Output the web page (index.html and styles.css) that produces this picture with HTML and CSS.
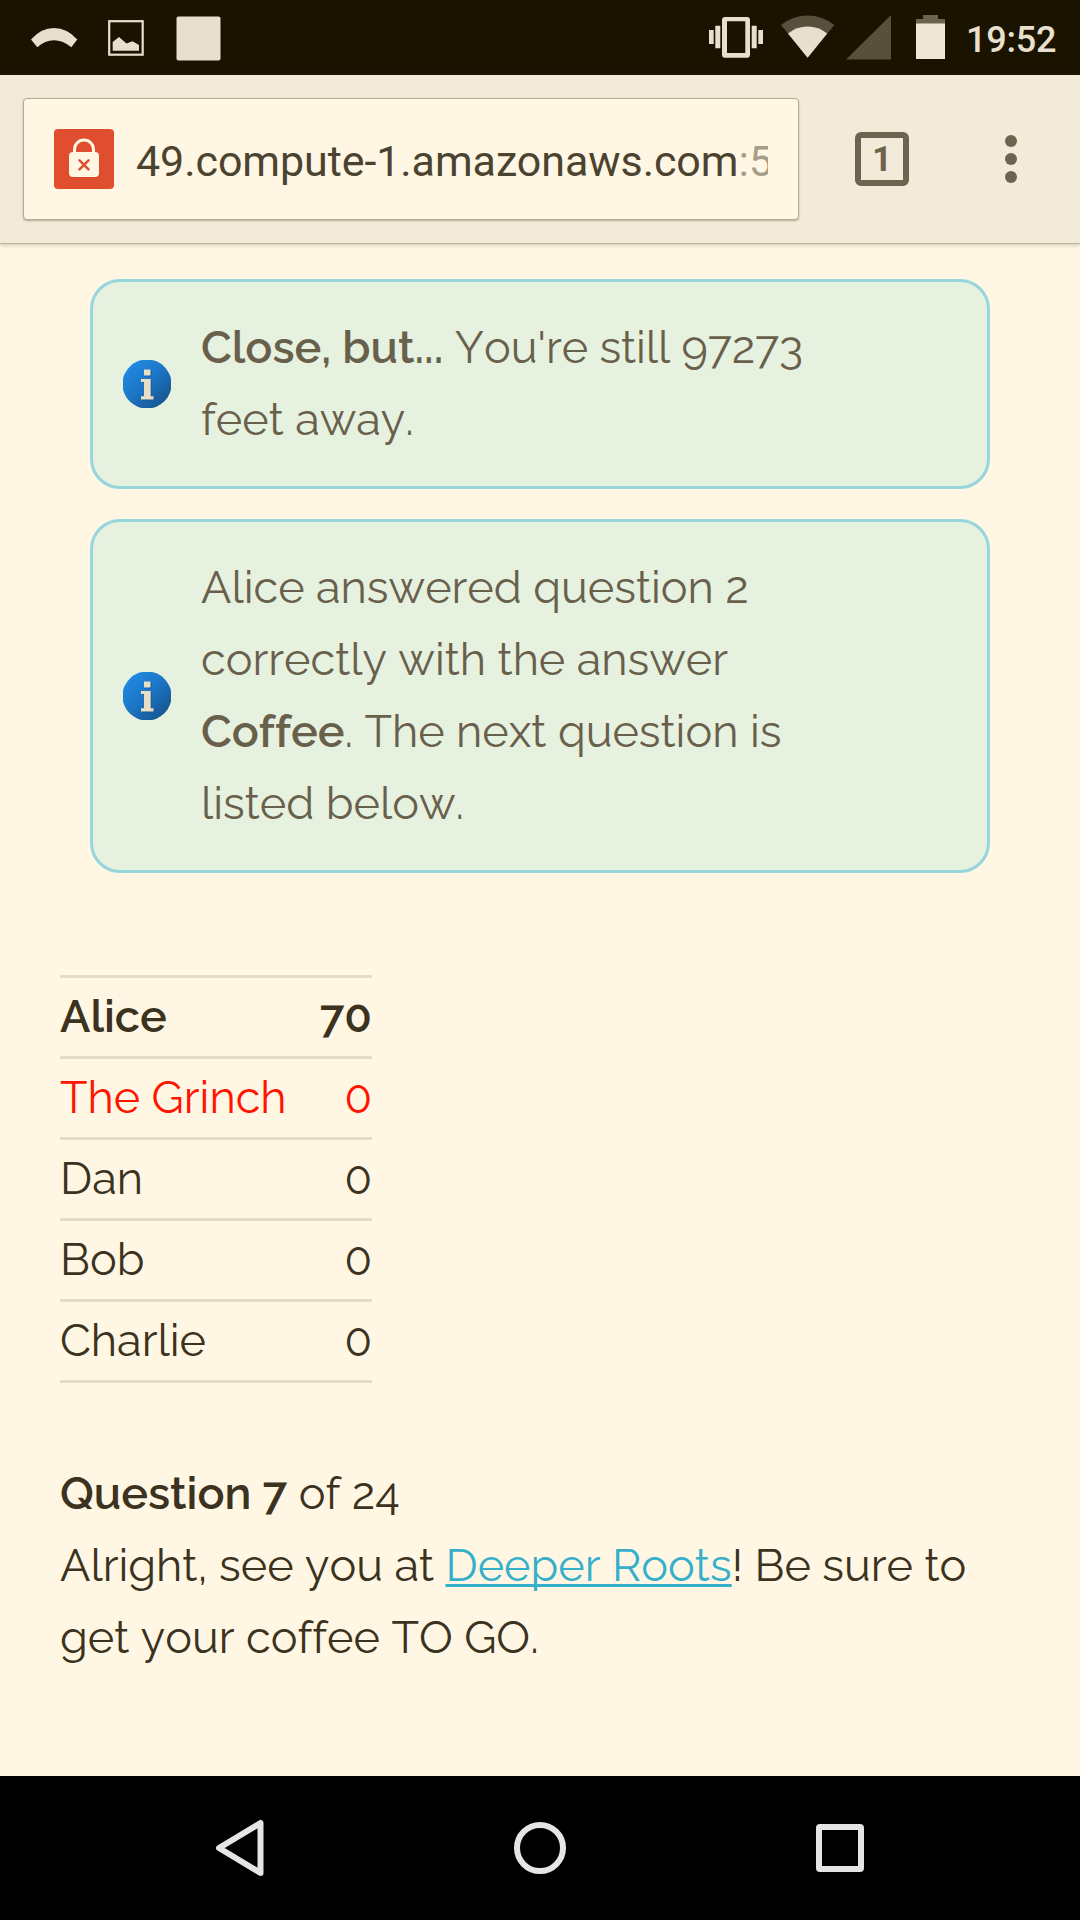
FILE: index.html
```
<!DOCTYPE html>
<html lang="en">
<head>
<meta charset="utf-8">
<title>Scavenger hunt</title>
<link rel="stylesheet" href="styles.css">
</head>
<body>
<svg class="defs" aria-hidden="true">
  <defs>
    <linearGradient id="info-blue" x1="0.15" y1="0.1" x2="0.85" y2="0.9">
      <stop offset="0" stop-color="#1f8ae2"/>
      <stop offset="0.5" stop-color="#1c74c4"/>
      <stop offset="1" stop-color="#17558f"/>
    </linearGradient>
    <symbol id="info" viewBox="0 0 48 48">
      <circle cx="24" cy="24" r="24.500" fill="url(#info-blue)"/>
      <path transform="translate(1 1)" fill="#124f87" opacity=".6" d="M21 9.500h6.500v6H21zM18 19h9.700v17.200h2.800v3.300H18v-3.300h3V22h-3z"/>
      <path fill="#e9dfc4" d="M21 9.500h6.500v6H21zM18 19h9.700v17.200h2.800v3.300H18v-3.300h3V22h-3z"/>
    </symbol>
  </defs>
</svg>

<header class="status-bar">
  <svg class="status-icons-left" viewBox="0 0 240 75">
    <g fill="#e8e0ce">
      <path d="M31 39.500Q41 28 54 28t23.300 11.500L71.300 47.200Q63 40.200 54 40.200t-16.700 7z"/>
      <path d="M112.700 42l6.300-5 7.500 6.500 6-2.200 6.500 3.800v5.700h-26.300z"/>
      <rect x="176.500" y="16.500" width="44" height="44" rx="2"/>
    </g>
    <rect x="109.200" y="21.200" width="33.500" height="33.500" fill="none" stroke="#e8e0ce" stroke-width="2.200"/>
  </svg>
  <svg class="status-icons-right" viewBox="700 0 260 75">
    <g fill="#e8e0ce">
      <path fill-rule="evenodd" d="M725 17h22a3 3 0 0 1 3 3v34.700a3 3 0 0 1-3 3h-22a3 3 0 0 1-3-3V20a3 3 0 0 1 3-3zm2 4.300V53h18.300V21.300z"/>
      <path d="M715.300 25.700h5v22.600h-5zM709 30h4.700v14H709zM751.700 25.700h5v22.600h-5zM758.300 30h4.700v14h-4.700z"/>
    </g>
    <path fill="#58503c" d="M807.600 57.700L781 25a42.500 42.500 0 0 1 53.300 0z"/>
    <path fill="#e8e0ce" d="M807.600 57.700L788 33.500a31.300 31.300 0 0 1 39.200 0z"/>
    <path fill="#58503c" d="M846 59.500L891 15v44.500z"/>
    <path fill="#6c644e" d="M916 24v-5h7v-4h15v4h7v5z"/>
    <path fill="#f0e8d6" d="M916 23.500h29V59h-29z"/>
  </svg>
  <time class="clock">19:52</time>
</header>

<div class="toolbar">
  <div class="url-box">
    <svg class="lock" viewBox="0 0 60 60">
      <rect width="60" height="60" rx="4" fill="#df4f2f"/>
      <path d="M20.500 25v-4.500a9.500 9.500 0 0 1 19 0V25" fill="none" stroke="#fff7e4" stroke-width="3"/>
      <rect x="15" y="23" width="30" height="25" rx="4" fill="#fff7e4"/>
      <path d="M25.500 31.300l9 9m0-9l-9 9" stroke="#df4f2f" stroke-width="2.500" stroke-linecap="round"/>
    </svg>
    <div class="url">49.compute-1.amazonaws.com<span class="port">:5</span></div>
  </div>
  <div class="tabs">1</div>
  <div class="menu"><i></i><i></i><i></i></div>
</div>

<main class="page">
  <section class="notices">
    <div class="notice">
      <svg class="info-icon"><use href="#info"/></svg>
      <p><b>Close, but...</b> <span class="distance">You're still 97273</span><br>feet away.</p>
    </div>
    <div class="notice">
      <svg class="info-icon"><use href="#info"/></svg>
      <p>Alice answered question 2<br>correctly with the answer<br><b>Coffee</b>. The next question is<br>listed below.</p>
    </div>
  </section>

  <table class="scores">
    <tr class="leader"><td>Alice</td><td>70</td></tr>
    <tr class="grinch"><td>The Grinch</td><td>0</td></tr>
    <tr><td>Dan</td><td>0</td></tr>
    <tr><td>Bob</td><td>0</td></tr>
    <tr><td>Charlie</td><td>0</td></tr>
  </table>

  <section class="question">
    <p><b>Question 7</b> of 24</p>
    <p>Alright, see you at <a href="#">Deeper Roots</a>! Be sure to<br>get your coffee TO GO.</p>
  </section>
</main>

<nav class="nav-bar">
  <svg viewBox="0 0 60 60"><path d="M50.500 5v50L9 30z"/></svg>
  <svg viewBox="0 0 60 60"><circle cx="30" cy="30" r="23"/></svg>
  <svg viewBox="0 0 60 60"><rect x="9" y="9" width="42" height="42" rx="1"/></svg>
</nav>
</body>
</html>
```
FILE: styles.css
```
* {
  box-sizing: border-box;
}

body {
  margin: 0;
  width: 1080px;
  height: 1920px;
  display: flex;
  flex-direction: column;
  overflow: hidden;
  background: #fff7e4;
  color: #3b3220;
  font: 400 45px/72px Raleway, Lato, sans-serif;
  font-kerning: none;
  font-variant-ligatures: none;
}

p {
  margin: 0;
}

b {
  font-weight: 600;
}

.defs {
  position: absolute;
  width: 0;
  height: 0;
}

/* Status bar */
.status-bar {
  flex: none;
  display: flex;
  height: 75px;
  background: #1a1300;
}

.status-icons-left {
  width: 240px;
  height: 75px;
}

.status-icons-right {
  width: 260px;
  height: 75px;
  margin-left: 460px;
}

.clock {
  margin-left: 6px;
  padding-top: 5px;
  color: #e8e0ce;
  font: 500 36px/71px Roboto, sans-serif;
  letter-spacing: -0.2px;
}

/* Browser toolbar */
.toolbar {
  flex: none;
  display: flex;
  align-items: center;
  height: 169px;
  padding: 0 63px 0 23px;
  background: #f3ebd9;
  border-bottom: 1px solid #bcb39f;
  box-shadow: 0 1px 4px rgba(90, 75, 40, 0.3);
}

.url-box {
  display: flex;
  align-items: center;
  width: 776px;
  height: 122px;
  margin-bottom: 14px;
  margin-top: 14px;
  padding: 0 30px;
  background: #fff7e4;
  border: 1px solid #b5ab96;
  border-radius: 4px;
  box-shadow: 0 1px 2px rgba(90, 75, 40, 0.4);
}

.lock {
  flex: none;
  width: 60px;
  height: 60px;
}

.url {
  flex: 1;
  margin-left: 22px;
  padding-top: 3px;
  overflow: hidden;
  white-space: nowrap;
  color: #4b4330;
  font: 400 43px/60px Roboto, sans-serif;
  letter-spacing: -0.07px;
}

.port {
  color: #a69e8a;
}

.tabs {
  width: 54px;
  height: 54px;
  margin-left: 56px;
  border: 6px solid #6c644e;
  border-radius: 6px;
  color: #6c644e;
  font: 700 35px/43px Roboto, sans-serif;
  text-align: center;
}

.menu {
  display: flex;
  flex-direction: column;
  gap: 6px;
  margin-left: auto;
}

.menu i {
  width: 12px;
  height: 12px;
  border-radius: 50%;
  background: #6c644e;
}

/* Page content */
.page {
  flex: 1;
  padding: 35px 60px 0;
}

.notices {
  display: flex;
  flex-direction: column;
  gap: 30px;
  padding: 0 30px;
}

.notice {
  display: flex;
  align-items: center;
  gap: 30px;
  padding: 30px;
  background: #e6f1e0;
  border: 3px solid #98d6de;
  border-radius: 30px;
  color: #69604b;
}

.distance {
  letter-spacing: -0.1px;
}

.info-icon {
  flex: none;
  width: 48px;
  height: 48px;
}

.scores {
  width: 312px;
  margin-top: 102px;
  border-collapse: collapse;
  border-top: 3px solid #e4dcc8;
}

.scores tr {
  border-bottom: 3px solid #e4dcc8;
}

.scores td {
  padding: 3px 0;
}

.scores td:last-child {
  text-align: right;
}

.leader {
  font-weight: 600;
}

.grinch {
  color: #ff1400;
}

.question {
  margin-top: 75px;
}

.question a {
  color: #36afca;
  text-decoration: underline 3px;
  text-underline-offset: 3px;
  text-decoration-skip-ink: none;
}

/* System navigation */
.nav-bar {
  flex: none;
  display: flex;
  justify-content: space-between;
  align-items: center;
  height: 144px;
  padding: 0 210px;
  background: #000;
}

.nav-bar svg {
  width: 60px;
  height: 60px;
  fill: none;
  stroke: #e5e5e5;
  stroke-width: 6;
  stroke-linejoin: round;
}
```
